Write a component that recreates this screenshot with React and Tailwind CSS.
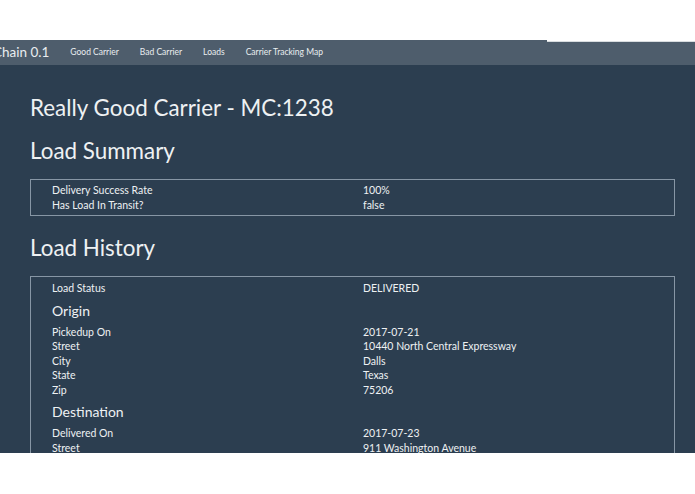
import React from "react";

const font = { fontFamily: "Lato, 'Open Sans', sans-serif" };

function Row({ label, value }) {
  return (
    <div className="grid grid-cols-[311px_1fr] leading-[14.5px] text-[10.5px]">
      <div>{label}</div>
      <div>{value}</div>
    </div>
  );
}

function Sub({ children }) {
  return <div className="h-[29px] flex items-center text-[14px]">{children}</div>;
}

export default function App() {
  return (
    <div className="w-[695px] h-[494px] bg-white overflow-hidden" style={font}>
      <div className="h-[40px] bg-white" />
      <nav className="relative h-[25px] bg-[#4e5d6c] flex items-center text-[#e9edf0]">
        <div className="absolute top-0 right-0 w-[148px] h-[2px] bg-white border-b border-[#d9dde0]" />
        <span className="ml-[-7px] text-[13.5px] mr-[21px]">Chain 0.1</span>
        <span className="text-[8.5px] mr-[21px]">Good Carrier</span>
        <span className="text-[8.5px] mr-[21px]">Bad Carrier</span>
        <span className="text-[8.5px] mr-[21px]">Loads</span>
        <span className="text-[8.5px]">Carrier Tracking Map</span>
      </nav>
      <main className="h-[388px] bg-[#2c3e50] text-[#eef1f3] pl-[30px] pr-[20px] pt-[28px] overflow-hidden">
        <h1 className="text-[22.4px] leading-[30px]">Really Good Carrier - MC:1238</h1>
        <h2 className="mt-[13px] text-[22.4px] leading-[30px]">Load Summary</h2>
        <div className="mt-[13px] border border-[#8796a5] py-[3px] pl-[21px]">
          <Row label="Delivery Success Rate" value="100%" />
          <Row label="Has Load In Transit?" value="false" />
        </div>
        <h2 className="mt-[17px] text-[22.4px] leading-[30px]">Load History</h2>
        <div className="mt-[13px] border border-[#8796a5] pt-[4px] pl-[21px] h-[300px]">
          <Row label="Load Status" value="DELIVERED" />
          <Sub>Origin</Sub>
          <Row label="Pickedup On" value="2017-07-21" />
          <Row label="Street" value="10440 North Central Expressway" />
          <Row label="City" value="Dalls" />
          <Row label="State" value="Texas" />
          <Row label="Zip" value="75206" />
          <Sub>Destination</Sub>
          <Row label="Delivered On" value="2017-07-23" />
          <Row label="Street" value="911 Washington Avenue" />
        </div>
      </main>
    </div>
  );
}
